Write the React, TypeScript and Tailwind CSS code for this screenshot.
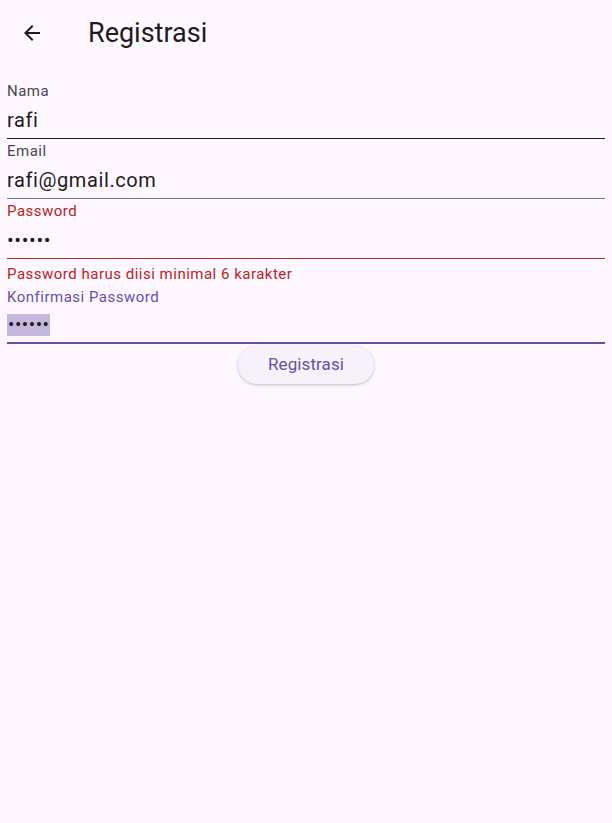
import React from "react";

function Field({
  label,
  value,
  labelColor,
  line,
  lineH,
  selected,
}: {
  label: string;
  value: string;
  labelColor: string;
  line: string;
  lineH: string;
  selected?: boolean;
}) {
  return (
    <div className="flex flex-col">
      <div className={`pt-[2px] text-[15px] leading-[20px] tracking-[0.5px] ${labelColor}`}>{label}</div>
      <div className={`${selected ? "h-[35px]" : "h-[37px]"} flex items-center`}>
        {selected ? (
          <span className="bg-[#c4b8dd] text-[#1d1b20] text-[19px] tracking-[0.5px] leading-[22px] px-[1px]">{value}</span>
        ) : (
          <span className="text-[#1d1b20] text-[20px] tracking-[0.6px]">{value}</span>
        )}
      </div>
      <div className={`${lineH} ${line}`} />
    </div>
  );
}

export default function App() {
  return (
    <div className="min-h-[823px] w-[612px] bg-[#fef7ff] font-['Roboto',sans-serif]">
      <div className="h-[66px] flex items-center">
        <div className="w-[64px] flex justify-center">
          <svg width="24" height="24" viewBox="0 0 24 24" className="text-[#1d1b20]">
            <path d="M20 11H7.83l5.59-5.59L12 4l-8 8 8 8 1.41-1.41L7.83 13H20v-2z" fill="currentColor" />
          </svg>
        </div>
        <div className="ml-[24px] text-[27px] text-[#1d1b20]">Registrasi</div>
      </div>
      <div className="px-[7px] pt-[13px] flex flex-col">
        <Field label="Nama" value="rafi" labelColor="text-[#49454f]" line="bg-[#1d1b20]" lineH="h-[1px]" />
        <Field label="Email" value="rafi@gmail.com" labelColor="text-[#49454f]" line="bg-[#79747e]" lineH="h-[1px]" />
        <Field label="Password" value="••••••" labelColor="text-[#b3261e]" line="bg-[#b3261e]" lineH="h-[1px]" />
        <div className="text-[15px] leading-[20px] tracking-[0.5px] text-[#b3261e] mt-[5px]">Password harus diisi minimal 6 karakter</div>
        <div className="mt-[1px]">
          <Field label="Konfirmasi Password" value="••••••" labelColor="text-[#6750a4]" line="bg-[#6750a4]" lineH="h-[2px]" selected />
        </div>
        <div className="flex justify-center mt-[2px]">
          <button className="h-[38px] px-[30px] rounded-full bg-[#f7f2fa] text-[#6750a4] text-[17px] tracking-[0.1px] shadow-[0_1px_3px_rgba(0,0,0,0.25)]">
            Registrasi
          </button>
        </div>
      </div>
    </div>
  );
}
